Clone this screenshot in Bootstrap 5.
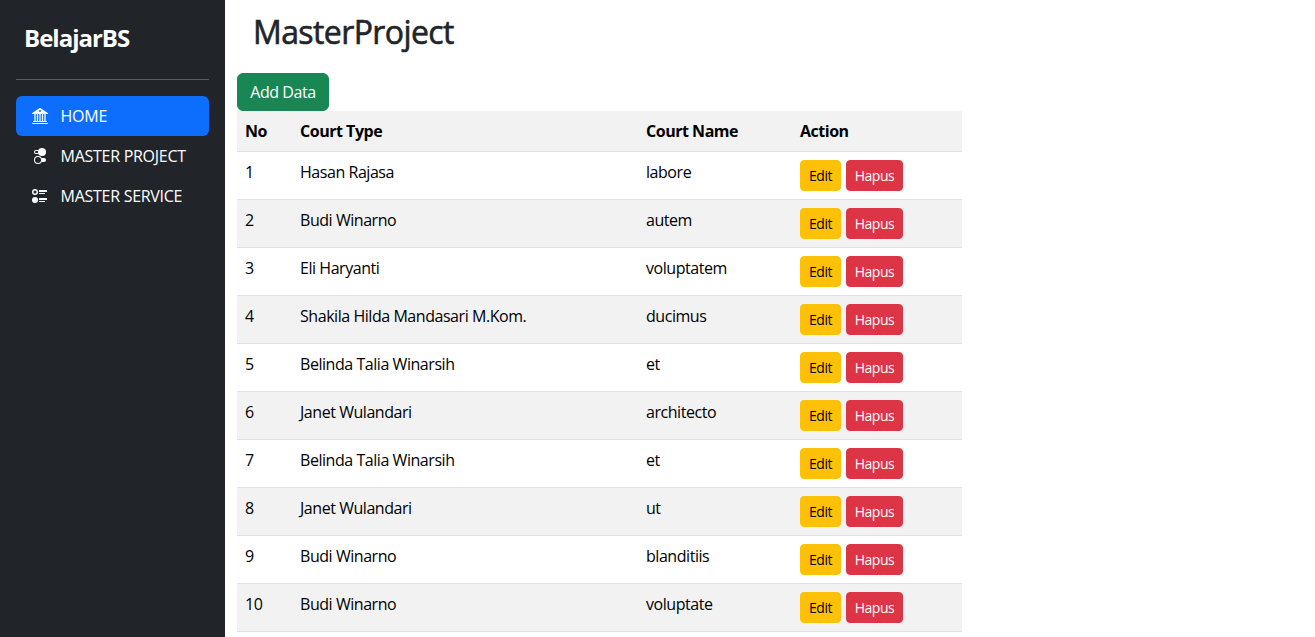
<!DOCTYPE html>
<html lang="id">
<head>
<meta charset="utf-8">
<meta name="viewport" content="width=device-width, initial-scale=1">
<title>MasterProject</title>
<link href="https://cdn.jsdelivr.net/npm/bootstrap@5.3.0/dist/css/bootstrap.min.css" rel="stylesheet">
<style>
body { font-family: "Open Sans", "Noto Sans", sans-serif; letter-spacing: -.45px; height: 100vh; overflow: hidden; }
.sidebar { width: 225px; }
.brand { font-size: 24px; line-height: 30px; letter-spacing: -1px; padding: 7px 8px 10px; }
.sidebar hr { border-color: #fff; opacity: .25; }
.sidebar .nav-link { height: 40px; letter-spacing: -.28px; }
.nav-icon { width: 16px; height: 16px; margin-right: 12.6px; }
.page-title { font-size: 32px; letter-spacing: -.6px; line-height: 38px; padding: 13px 16px 22px; -webkit-text-stroke: .6px currentColor; }
.data-table { width: 725px; table-layout: fixed; --bs-table-color: #000; --bs-table-striped-color: #000; }
.data-table th { letter-spacing: -.48px; }
.data-table td { height: 48px; }
.col-no { width: 55px; } .col-type { width: 346px; } .col-name { width: 154px; }
.btn-edit { width: 41px; } .btn-hapus { width: 57px; margin-left: 5px; }
.btn-sm { height: 31px; padding-left: 0; padding-right: 0; letter-spacing: -.45px; }
.btn-add { width: 92px; padding-left: 0; padding-right: 0; height: 38px; letter-spacing: -.45px; }
</style>
</head>
<body class="d-flex bg-white">
<aside class="sidebar d-flex flex-column flex-shrink-0 p-3 text-bg-dark vh-100">
  <a href="#" class="brand fw-bold text-white text-decoration-none">BelajarBS</a>
  <hr>
  <ul class="nav nav-pills flex-column mb-auto">
    <li class="nav-item"><a href="#" class="nav-link active d-flex align-items-center" aria-current="page">
      <svg class="nav-icon" viewBox="0 0 16 16" fill="currentColor"><path d="M8.277.084a.5.5 0 0 0-.554 0l-7.5 5A.5.5 0 0 0 .5 6h1.875v7H1.5a.5.5 0 0 0 0 1h13a.5.5 0 1 0 0-1h-.875V6H15.5a.5.5 0 0 0 .277-.916l-7.5-5zM12.375 6v7h-1.25V6h1.25zm-2.5 0v7h-1.25V6h1.25zm-2.5 0v7h-1.25V6h1.25zm-2.5 0v7h-1.25V6h1.25zM8 4a1 1 0 1 1 0-2 1 1 0 0 1 0 2zM.5 15a.5.5 0 0 0 0 1h15a.5.5 0 1 0 0-1H.5z"/></svg><span>HOME</span></a></li>
    <li><a href="#" class="nav-link text-white d-flex align-items-center">
      <svg class="nav-icon" viewBox="0 0 16 16" fill="currentColor"><path d="M9.465 10H12a2 2 0 1 1 0 4H9.465c.34-.588.535-1.271.535-2 0-.729-.195-1.412-.535-2z"/><path d="M6 15a3 3 0 1 0 0-6 3 3 0 0 0 0 6zm0 1a4 4 0 1 1 0-8 4 4 0 0 1 0 8zm.535-10a3.975 3.975 0 0 1-.409-1H4a1 1 0 0 1 0-2h2.126c.091-.355.23-.69.41-1H4a2 2 0 1 0 0 4h2.535z"/><path d="M14 4a4 4 0 1 1-8 0 4 4 0 0 1 8 0z"/></svg><span>MASTER PROJECT</span></a></li>
    <li><a href="#" class="nav-link text-white d-flex align-items-center">
      <svg class="nav-icon" viewBox="0 0 16 16" fill="currentColor"><path d="M7 2.5a.5.5 0 0 1 .5-.5h7a.5.5 0 0 1 .5.5v1a.5.5 0 0 1-.5.5h-7a.5.5 0 0 1-.5-.5v-1zM0 12a3 3 0 1 1 6 0 3 3 0 0 1-6 0zm7-1.5a.5.5 0 0 1 .5-.5h7a.5.5 0 0 1 .5.5v1a.5.5 0 0 1-.5.5h-7a.5.5 0 0 1-.5-.5v-1zm0-5a.5.5 0 0 1 .5-.5h5a.5.5 0 0 1 0 1h-5a.5.5 0 0 1-.5-.5zm0 8a.5.5 0 0 1 .5-.5h5a.5.5 0 0 1 0 1h-5a.5.5 0 0 1-.5-.5zM3 1a3 3 0 1 0 0 6 3 3 0 0 0 0-6zm0 4.5a1.5 1.5 0 1 1 0-3 1.5 1.5 0 0 1 0 3z"/></svg><span>MASTER SERVICE</span></a></li>
  </ul>
</aside>
<main class="flex-grow-1 ps-2 ms-1">
  <h2 class="page-title mb-0">MasterProject</h2>
  <button type="button" class="btn btn-success btn-add d-block">Add Data</button>
  <table class="table table-striped data-table mb-0">
    <colgroup><col class="col-no"><col class="col-type"><col class="col-name"><col></colgroup>
    <tbody id="rows"><tr><th>No</th><th>Court Type</th><th>Court Name</th><th>Action</th></tr></tbody>
  </table>
</main>
<script src="https://cdn.jsdelivr.net/npm/bootstrap@5.3.0/dist/js/bootstrap.bundle.min.js"></script>
<script>
const courts = [
  ["Hasan Rajasa", "labore"], ["Budi Winarno", "autem"], ["Eli Haryanti", "voluptatem"],
  ["Shakila Hilda Mandasari M.Kom.", "ducimus"], ["Belinda Talia Winarsih", "et"],
  ["Janet Wulandari", "architecto"], ["Belinda Talia Winarsih", "et"], ["Janet Wulandari", "ut"],
  ["Budi Winarno", "blanditiis"], ["Budi Winarno", "voluptate"]
];
document.getElementById("rows").insertAdjacentHTML("beforeend", courts.map(([type, name], i) =>
  `<tr><td>${i + 1}</td><td>${type}</td><td>${name}</td><td><div class="d-flex"><button type="button" class="btn btn-warning btn-sm btn-edit">Edit</button><button type="button" class="btn btn-danger btn-sm btn-hapus">Hapus</button></div></td></tr>`).join(""));
</script>
</body>
</html>
